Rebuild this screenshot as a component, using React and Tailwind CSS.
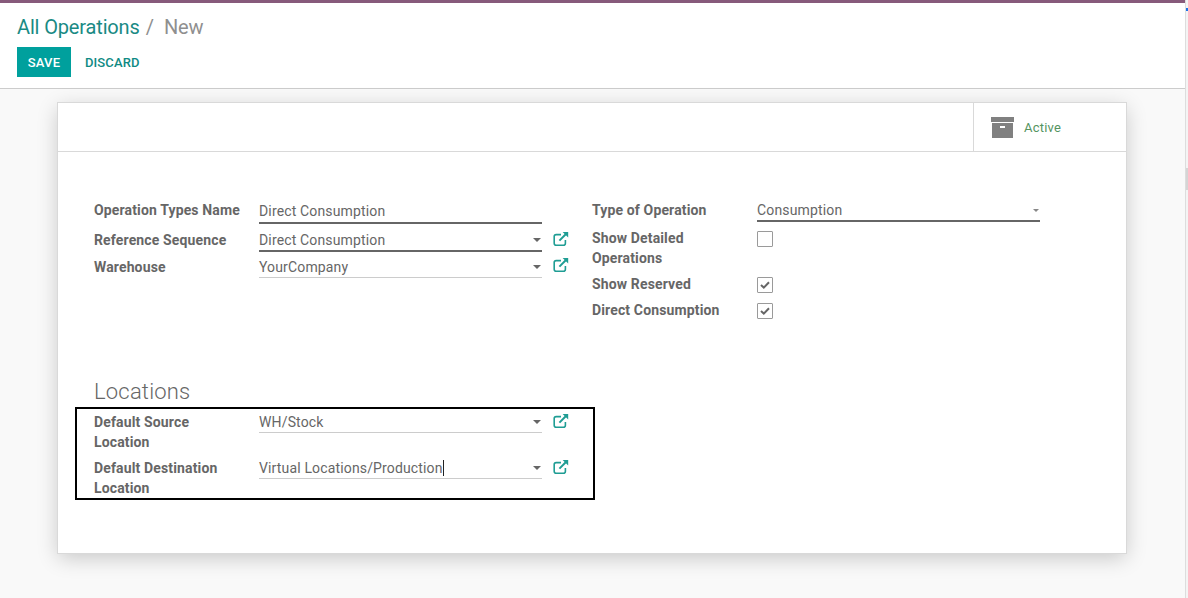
const labelClass = "text-[14px] leading-[20px] font-bold text-[#666666] tracking-[0.14px]";

function ExternalIcon({ className = "" }) {
  return (
    <svg width="16" height="16" viewBox="0 0 16 16" fill="none" stroke="#1f9d94" strokeWidth="1.6" className={`ml-[11px] shrink-0 ${className}`}>
      <path d="M8 3.6H3.2C2 3.6 1.2 4.4 1.2 5.6v6.6c0 1.2.8 2 2 2h7.2c1.2 0 2-.8 2-2V9" />
      <path d="M6.4 9.6 13 3" strokeWidth="2" />
      <path d="M9.6 1h5.6v5.6z" fill="#1f9d94" stroke="none" />
    </svg>
  );
}

function Caret({ small }) {
  return small ? (
    <svg width="6" height="3" viewBox="0 0 6 3" className="shrink-0">
      <path d="M0 0h6L3 3z" fill="#888888" />
    </svg>
  ) : (
    <svg width="8" height="4" viewBox="0 0 8 4" className="shrink-0">
      <path d="M0 0h8L4 4z" fill="#666666" />
    </svg>
  );
}

function Field({ value, strong, caret, smallCaret, cursor, height = "h-[24px]" }) {
  return (
    <div className={`w-[283px] ${height} flex items-center justify-between shrink-0 ${strong ? "border-b-2 border-[#666666]" : "border-b border-[#cccccc]"}`}>
      <span className="text-[14px] leading-[20px] text-[#666666] tracking-[0.15px] flex items-center">
        {value}
        {cursor && <span className="inline-block w-px h-[16px] bg-[#222222]" />}
      </span>
      {caret && <span className="mr-[1px] flex"><Caret small={smallCaret} /></span>}
    </div>
  );
}

function Check({ checked }) {
  return (
    <div className="w-[16px] h-[16px] mt-[3px] border border-[#9a9a9a] bg-white rounded-[1px] flex items-center justify-center">
      {checked && (
        <svg width="10" height="8" viewBox="0 0 10 8">
          <path d="M1 4l2.8 2.6L9 1.2" fill="none" stroke="#666666" strokeWidth="2" />
        </svg>
      )}
    </div>
  );
}

function LocationRow({ first, second, value, cursor }) {
  return (
    <div className="flex items-start">
      <div className={`w-[165px] shrink-0 ${labelClass}`}>
        {first}
        <br />
        {second}
      </div>
      <Field value={value} caret cursor={cursor} height="h-[21px]" />
      <ExternalIcon className="mt-[1px]" />
    </div>
  );
}

export default function App() {
  return (
    <div className="h-[598px] w-[1188px] flex bg-[#f9f9f9] font-['Roboto',sans-serif] overflow-hidden">
      <div className="w-[1185px] flex flex-col shrink-0">
        <div className="h-[3px] bg-[#875a7b] shrink-0" />
        <div className="h-[86px] bg-white border-b border-[#cccccc] px-[17px] pt-[11px] shrink-0">
          <div className="text-[20px] leading-[26px] flex">
            <span className="text-[#1a8a84] tracking-[-0.15px]">All Operations</span>
            <span className="text-[#8f8f8f] ml-[6px]">/</span>
            <span className="text-[#8f8f8f] ml-[10px] tracking-[-0.2px]">New</span>
          </div>
          <div className="flex items-center mt-[7px]">
            <button className="h-[30px] w-[54px] pt-px bg-[#00a09d] text-white text-[13px] font-medium tracking-[0.2px]">SAVE</button>
            <button className="ml-[14px] pt-px text-[#0f8a84] text-[13px] font-medium tracking-[0.1px]">DISCARD</button>
          </div>
        </div>

        <div className="mx-[57px] mt-[13px] w-[1070px] h-[452px] bg-white border border-[#d9d9d9] shadow-[0_5px_20px_-1px_rgba(0,0,0,0.2)] shrink-0">
          <div className="h-[49px] border-b border-[#d9d9d9] flex justify-end">
            <div className="w-[153px] border-l border-[#d9d9d9] flex items-center pl-[17px] pt-px">
              <svg width="24" height="21" viewBox="0 0 24 21">
                <rect x="0" y="0" width="23" height="5" fill="#808080" />
                <rect x="1" y="6" width="21" height="15" fill="#808080" />
                <rect x="9" y="9" width="5" height="2" fill="#ffffff" />
              </svg>
              <span className="ml-[9px] pt-px text-[13px] tracking-[0.2px] text-[#55945f]">Active</span>
            </div>
          </div>

          <div className="pl-[36px] pt-[48px]">
            <div className="flex">
              <div className="w-[498px] shrink-0">
                <div className="flex items-start">
                  <div className={`w-[165px] shrink-0 ${labelClass}`}>Operation Types Name</div>
                  <Field value="Direct Consumption" strong />
                </div>
                <div className="flex items-start mt-[5px]">
                  <div className={`w-[165px] shrink-0 mt-px ${labelClass}`}>Reference Sequence</div>
                  <Field value="Direct Consumption" strong caret height="h-[23px]" />
                  <ExternalIcon className="mt-[2px]" />
                </div>
                <div className="flex items-start mt-[4px]">
                  <div className={`w-[165px] shrink-0 mt-px ${labelClass}`}>Warehouse</div>
                  <Field value="YourCompany" caret height="h-[22px]" />
                  <ExternalIcon className="mt-px" />
                </div>
              </div>
              <div className="flex-1">
                <div className="flex items-start">
                  <div className={`w-[165px] shrink-0 ${labelClass}`}>Type of Operation</div>
                  <Field value="Consumption" strong caret smallCaret height="h-[22px]" />
                </div>
                <div className="flex items-start mt-[6px]">
                  <div className={`w-[165px] shrink-0 ${labelClass}`}>Show Detailed<br />Operations</div>
                  <Check />
                </div>
                {["Show Reserved", "Direct Consumption"].map((label) => (
                  <div key={label} className="flex items-start mt-[6px]">
                    <div className={`w-[165px] shrink-0 ${labelClass}`}>{label}</div>
                    <Check checked />
                  </div>
                ))}
              </div>
            </div>

            <div className="mt-[58px] text-[22px] leading-[28px] text-[#666666] font-light tracking-[0.2px]">Locations</div>
            <div className="-ml-[19px] mt-px w-[520px] h-[93px] border-2 border-black pl-[17px] pt-[3px] flex flex-col gap-[6px]">
              <LocationRow first="Default Source" second="Location" value="WH/Stock" />
              <LocationRow first="Default Destination" second="Location" value="Virtual Locations/Production" cursor />
            </div>
          </div>
        </div>
      </div>

      <div className="w-[3px] bg-[#f4f4f4] border-l border-[#dddddd] relative">
        <div className="absolute top-[8px] left-0 w-[3px] h-[3px] bg-[#1a73e8]" />
        <div className="absolute top-[168px] left-0 w-[3px] h-[22px] bg-[#d5d5d5]" />
      </div>
    </div>
  );
}
